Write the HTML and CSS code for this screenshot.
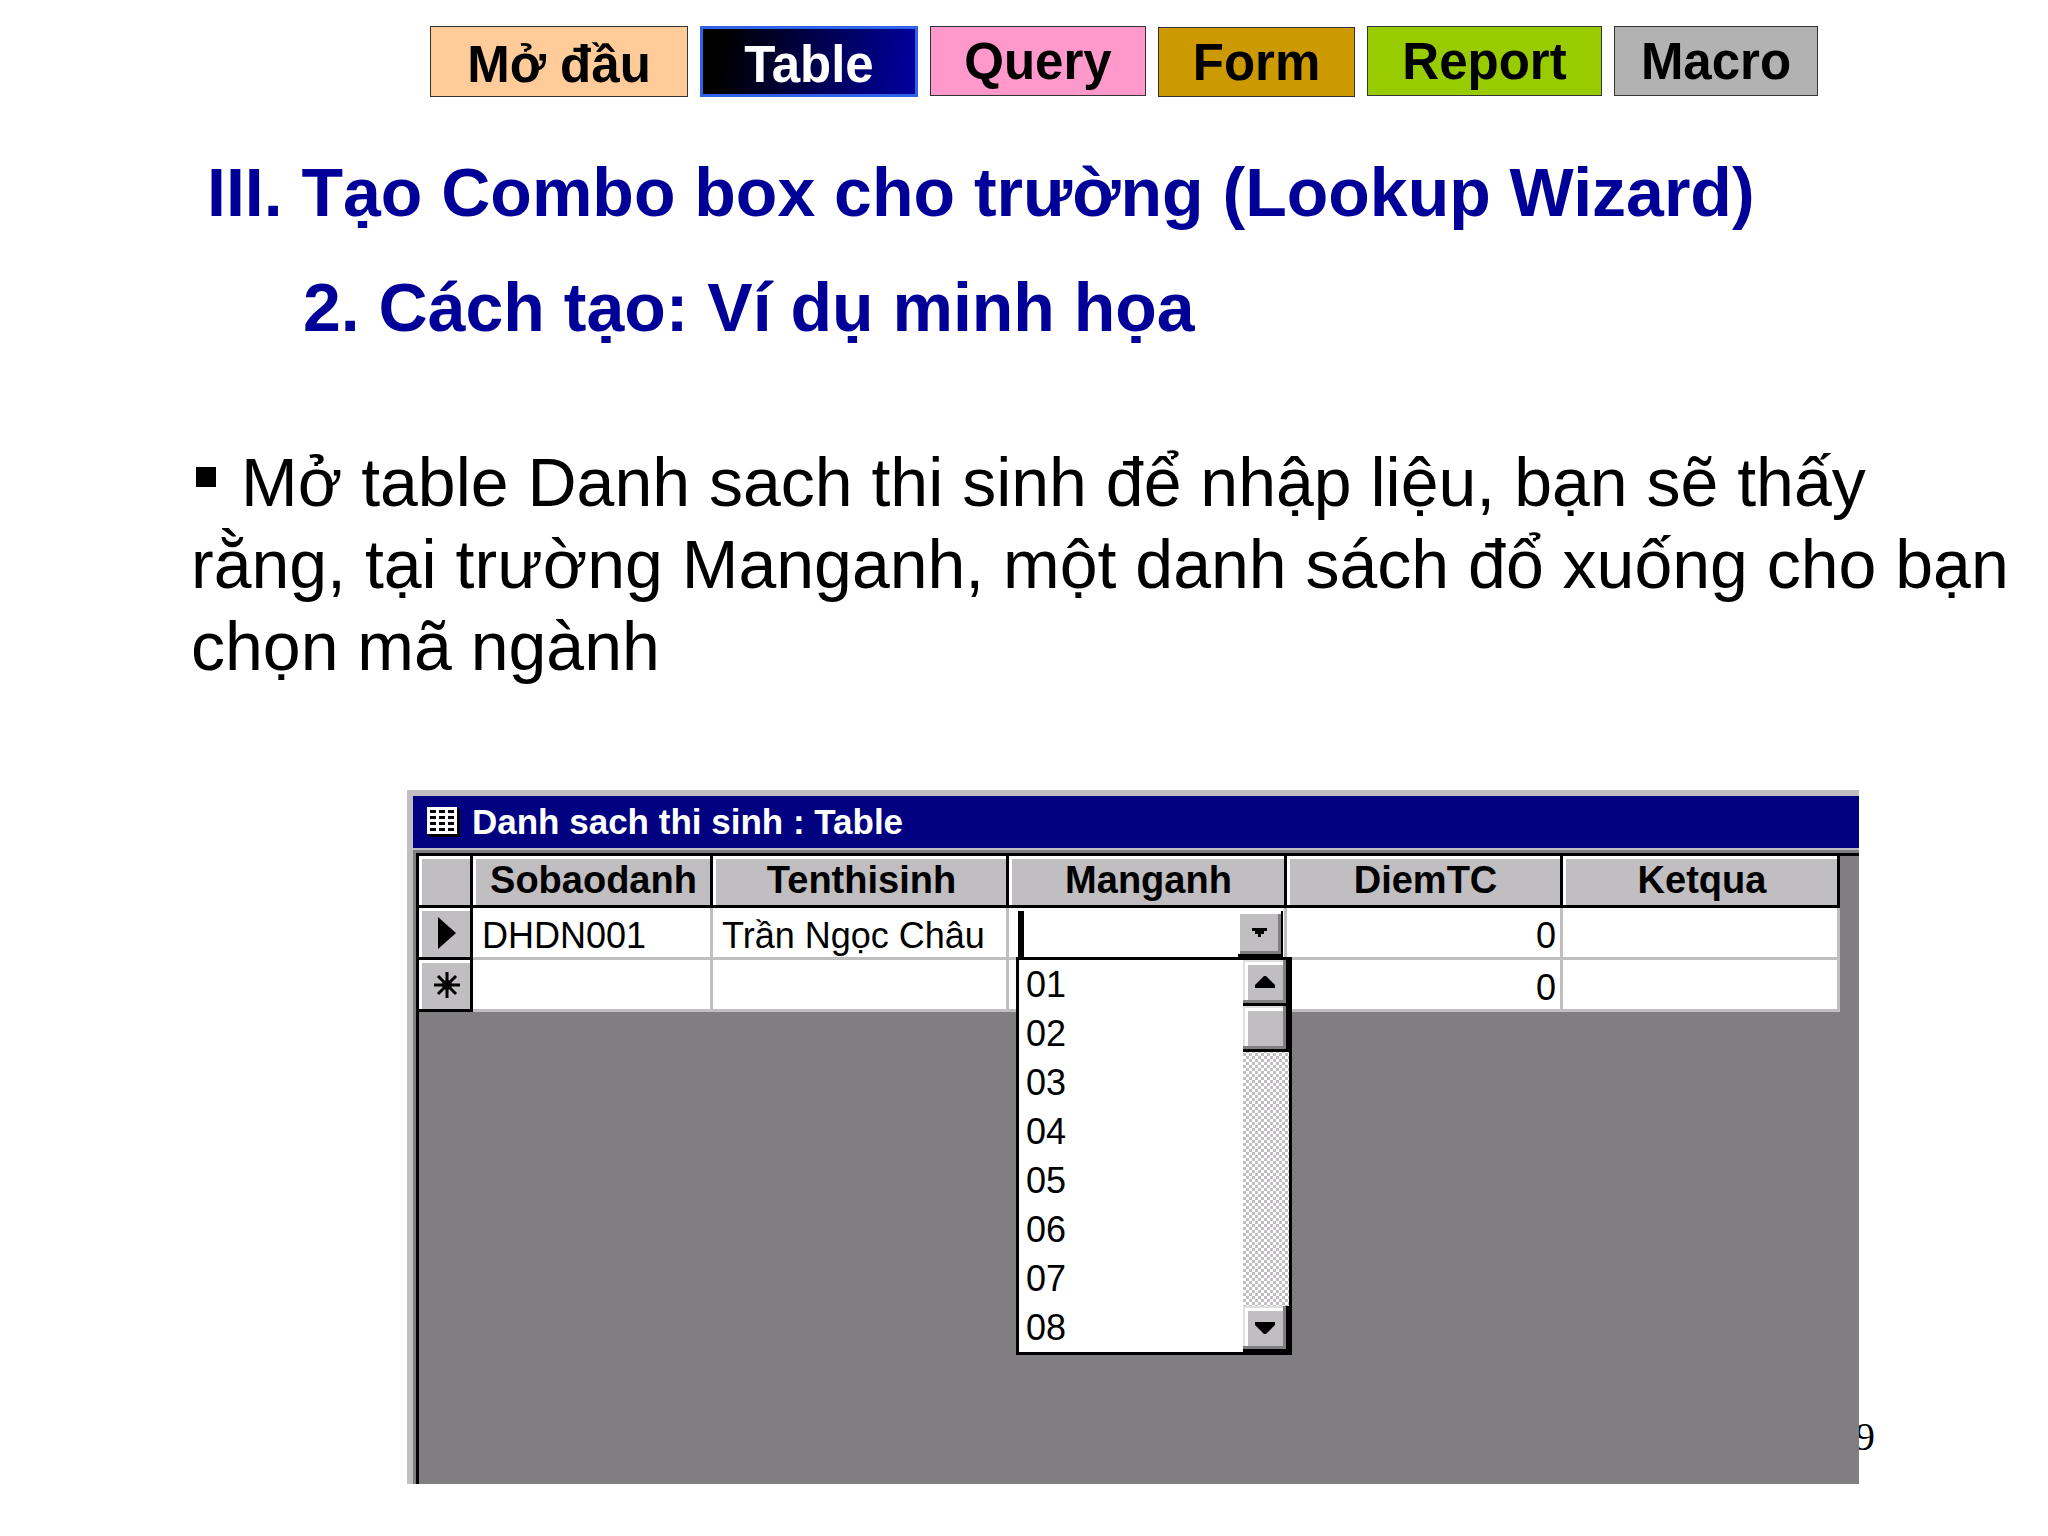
FILE: index.html
```html
<!DOCTYPE html>
<html lang="vi">
<head>
  <meta charset="UTF-8">
  <meta name="viewport" content="width=device-width, initial-scale=1.0">
  <title>Lookup Wizard</title>
  <link rel="stylesheet" href="styles.css">
</head>
<body>
  <!-- Chapter navigation -->
  <nav class="tabs">
    <a href="#intro" class="tab tab-tall tab-intro">Mở đầu</a>
    <a href="#table" class="tab tab-tall tab-table">Table</a>
    <a href="#query" class="tab tab-query">Query</a>
    <a href="#form" class="tab tab-form">Form</a>
    <a href="#report" class="tab tab-report">Report</a>
    <a href="#macro" class="tab tab-macro">Macro</a>
  </nav>

  <main>
    <h1>III. Tạo Combo box cho trường (Lookup Wizard)</h1>
    <h2>2. Cách tạo: Ví dụ minh họa</h2>
    <p class="text"><span class="bullet"></span>Mở table Danh sach thi sinh để nhập liệu, bạn sẽ thấy rằng, tại trường Manganh, một danh sách đổ xuống cho bạn chọn mã ngành</p>

    <div class="figure">
      <!-- Access datasheet window -->
      <section class="window">
        <header class="titlebar">
          <svg class="title-icon" width="33" height="30" viewBox="0 0 33 30" shape-rendering="crispEdges">
            <rect x="2" y="2" width="31" height="28" fill="#000"/>
            <rect width="30" height="27" fill="#fff"/>
            <path d="M3 4h6M12 4h6M21 4h6M3 10h6M12 10h6M21 10h6M3 16h6M12 16h6M21 16h6M3 22h6M12 22h6M21 22h6" stroke="#000" stroke-width="3"/>
          </svg>
          <span>Danh sach thi sinh : Table</span>
        </header>

        <div class="sheet">
          <table class="grid">
            <colgroup>
              <col class="col-selector">
              <col class="col-id">
              <col class="col-name">
              <col class="col-major">
              <col class="col-score">
              <col>
            </colgroup>
            <thead>
              <tr>
                <th></th>
                <th>Sobaodanh</th>
                <th>Tenthisinh</th>
                <th>Manganh</th>
                <th>DiemTC</th>
                <th>Ketqua</th>
              </tr>
            </thead>
            <tbody>
              <tr>
                <th>
                  <svg width="18" height="32" viewBox="0 0 18 32"><path d="M0 0L18 16L0 32Z"/></svg>
                </th>
                <td>DHDN001</td>
                <td>Trần Ngọc Châu</td>
                <td class="combo-cell">
                  <div class="combo">
                    <input type="text" class="combo-input" aria-label="Manganh">
                    <button type="button" class="combo-button" aria-label="Manganh list">
                      <svg width="15" height="9" viewBox="0 0 15 9" shape-rendering="crispEdges"><path d="M0 0H15V3H12V6H9V9H6V6H3V3H0Z"/></svg>
                    </button>
                  </div>
                  <div class="dropdown">
                    <select class="list" size="8" aria-label="Manganh values">
                      <option>01</option>
                      <option>02</option>
                      <option>03</option>
                      <option>04</option>
                      <option>05</option>
                      <option>06</option>
                      <option>07</option>
                      <option>08</option>
                    </select>
                    <div class="scrollbar">
                      <button type="button" class="scroll-part" aria-label="Scroll up">
                        <svg width="20" height="12" viewBox="0 0 20 12"><path d="M0 12V9L9 0H11L20 9V12Z"/></svg>
                      </button>
                      <div class="scroll-part"></div>
                      <button type="button" class="scroll-part scroll-down" aria-label="Scroll down">
                        <svg width="20" height="12" viewBox="0 0 20 12"><path d="M0 0H20V3L11 12H9L0 3Z"/></svg>
                      </button>
                    </div>
                  </div>
                </td>
                <td class="number">0</td>
                <td></td>
              </tr>
              <tr>
                <th>
                  <svg width="26" height="26" viewBox="0 0 26 26"><path d="M13 0V26M0 13H26M4 4L22 22M22 4L4 22" stroke="#000" stroke-width="3"/><circle cx="13" cy="13" r="5"/></svg>
                </th>
                <td></td>
                <td></td>
                <td></td>
                <td class="number">0</td>
                <td></td>
              </tr>
            </tbody>
          </table>
        </div>
      </section>
      <span class="page-number">9</span>
    </div>
  </main>
</body>
</html>
```
FILE: styles.css
```css
* {
  box-sizing: border-box;
}
body {
  margin: 0;
  background: #fff;
  color: #000;
  font-family: "Liberation Sans", Arial, sans-serif;
}

/* Chapter navigation */
.tabs {
  display: flex;
  gap: 12px;
  height: 97px;
  padding: 26px 0 0 430px;
}
.tab {
  display: flex;
  justify-content: center;
  align-items: center;
  height: 70px;
  border: 1px solid #333;
  color: #000;
  font-size: 51px;
  font-weight: bold;
  text-decoration: none;
}
.tab-tall {
  height: 71px;
  padding-top: 6px;
}
.tab-intro {
  width: 258px;
  background: #ffcc99;
}
.tab-table {
  width: 218px;
  border: 3px solid #2f62e8;
  background: linear-gradient(100deg, #000 10%, #000099 95%);
  color: #fff;
}
.tab-query {
  width: 216px;
  background: #ff99cc;
}
.tab-form {
  align-self: flex-end;
  width: 197px;
  background: #cc9900;
}
.tab-report {
  width: 235px;
  background: #99cc00;
}
.tab-macro {
  width: 204px;
  background: #b2b2b2;
}

/* Slide text */
h1,
h2 {
  margin: 0;
  color: #000099;
  font-size: 68px;
  line-height: 80px;
}
h1 {
  padding: 55px 0 0 207px;
}
h2 {
  padding: 35px 0 0 303px;
}
.text {
  margin: 94px 30px 103px 191px;
  font-size: 68px;
  line-height: 82px;
}
.bullet {
  display: inline-block;
  width: 20px;
  height: 20px;
  margin: 0 25px 0 5px;
  background: #000;
  vertical-align: 19px;
}

/* Datasheet window */
.figure {
  position: relative;
  margin: 0 189px 52px 407px;
}
.window {
  display: flex;
  flex-direction: column;
  min-height: 694px;
  padding: 6px 0 0 6px;
  background: #c0bec0;
}
.titlebar {
  display: flex;
  align-items: center;
  gap: 12px;
  height: 52px;
  margin-bottom: 2px;
  padding-left: 14px;
  background: #000080;
  color: #fff;
  font-size: 35px;
  font-weight: bold;
}
.sheet {
  flex: 1;
  margin: 3px 0 0 3px;
  padding-right: 19px;
  border-top: 3px solid #000;
  border-left: 3px solid #000;
  background: #807e80;
  outline: 3px solid #807e80;
  clip-path: inset(-3px 0 0 -3px);
}
.grid {
  width: 100%;
  table-layout: fixed;
  border-spacing: 0;
}
.col-selector {
  width: 54px;
}
.col-id {
  width: 240px;
}
.col-name {
  width: 296px;
}
.col-major {
  width: 278px;
}
.col-score {
  width: 276px;
}
.grid th {
  height: 52px;
  padding: 0 0 0 4px;
  border-right: 3px solid #000;
  border-bottom: 3px solid #000;
  background: #c0bec0;
  box-shadow: inset 3px 3px #fff;
  font-size: 38px;
  line-height: 43px;
}
.grid th svg {
  display: block;
  margin: 0 auto;
}
.grid td {
  height: 52px;
  padding: 6px 4px 0 9px;
  border-right: 3px solid #c0bec0;
  border-bottom: 3px solid #c0bec0;
  background: #fff;
  font-size: 36px;
  line-height: 41px;
  white-space: nowrap;
}
.grid .number {
  text-align: right;
}

/* Combo box */
.grid .combo-cell {
  position: relative;
  padding: 3px 1px 0 9px;
}
.combo {
  display: flex;
  height: 46px;
}
.combo-input {
  flex: 1;
  min-width: 0;
  padding: 0 4px;
  border: 0;
  border-left: 6px solid #000;
  background: #fff;
  font: inherit;
  outline: 0;
}
.combo-button {
  display: flex;
  justify-content: center;
  align-items: center;
  width: 45px;
  padding: 0;
  border: 0;
  border-right: 2px solid #000;
  border-bottom: 3px solid #000;
  background: #c0bec0;
  box-shadow: inset 2px 3px #fff, inset -3px -3px #807e80;
}
.dropdown {
  position: absolute;
  top: 100%;
  left: 7px;
  z-index: 1;
  display: flex;
  width: 276px;
  border: 3px solid #000;
  background: #fff;
}
.list {
  flex: 1;
  min-width: 0;
  height: 392px;
  padding: 0;
  border: 0;
  border-radius: 0;
  background: #fff;
  color: #000;
  font: inherit;
  overflow: hidden;
  outline: 0;
}
.list option {
  height: 49px;
  padding: 4px 7px;
  color: #000;
}
.scrollbar {
  display: flex;
  flex-direction: column;
  width: 46px;
  background: repeating-conic-gradient(#c0bec0 0 25%, #fff 0 50%) 0 0 / 6px 6px;
}
.scroll-part {
  display: flex;
  justify-content: center;
  align-items: center;
  height: 46px;
  padding: 0;
  border: 0;
  border-right: 3px solid #000;
  border-bottom: 3px solid #000;
  background: #c0bec0;
  box-shadow: inset -3px -3px #807e80, inset 2px 2px #dfdfdf, inset 5px 5px #fff;
}
.scroll-down {
  margin-top: auto;
}

.page-number {
  position: absolute;
  right: -16px;
  bottom: 24px;
  z-index: -1;
  font-family: "Liberation Serif", "Times New Roman", serif;
  font-size: 40px;
  line-height: 46px;
}
```
